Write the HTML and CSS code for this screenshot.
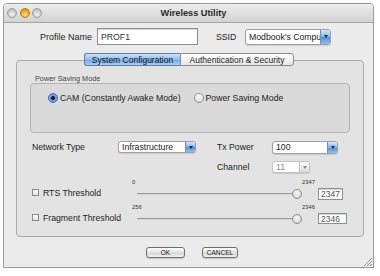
FILE: index.html
```html
<!DOCTYPE html>
<html>
<head>
<meta charset="utf-8">
<link rel="stylesheet" href="styles.css">
</head>
<body>
<div class="win">
  <div class="titlebar">
    <div class="lights">
      <span class="light gray"></span>
      <span class="light orange"></span>
      <span class="light gray"></span>
    </div>
    <div class="title">Wireless Utility</div>
    <div></div>
  </div>

  <div class="profile-row">
    <span class="lbl profile-lbl">Profile Name</span>
    <div class="textbox tb-profile">PROF1</div>
    <span class="lbl ssid-lbl">SSID</span>
    <div class="select sel-ssid"><span class="sel-text">Modbook's Compu</span><span class="sel-btn blue"><i class="arrow"></i></span></div>
  </div>

  <div class="tabs">
    <div class="tab active">System Configuration</div>
    <div class="tab">Authentication &amp; Security</div>
  </div>

  <div class="panel">
    <div class="group-lbl">Power Saving Mode</div>
    <div class="group">
      <span class="radio on"></span><span class="radio-text">CAM (Constantly Awake Mode)</span>
      <span class="radio r2"></span><span class="radio-text">Power Saving Mode</span>
    </div>

    <div class="row-a">
      <span class="lbl net-lbl">Network Type</span>
      <div class="select sel-infra"><span class="sel-text">Infrastructure</span><span class="sel-btn blue"><i class="arrow"></i></span></div>
      <span class="lbl tx-lbl">Tx Power</span>
      <div class="select sel-tx"><span class="sel-text">100</span><span class="sel-btn blue"><i class="arrow"></i></span></div>
    </div>

    <div class="row-b">
      <span class="lbl tx-lbl">Channel</span>
      <div class="select sel-ch dim"><span class="sel-text">11</span><span class="sel-btn grey"><i class="arrow"></i></span></div>
    </div>

    <div class="srow">
      <div class="check-cell"><span class="check"></span><span>RTS Threshold</span></div>
      <div class="min">0</div>
      <div class="slider"><span class="track"></span><span class="thumb"></span></div>
      <div class="max">2347</div>
      <div class="val-cell"><div class="textbox tb-val">2347</div></div>
    </div>

    <div class="srow frag">
      <div class="check-cell"><span class="check"></span><span>Fragment Threshold</span></div>
      <div class="min">256</div>
      <div class="slider"><span class="track"></span><span class="thumb"></span></div>
      <div class="max">2346</div>
      <div class="val-cell"><div class="textbox tb-val wide">2346</div></div>
    </div>
  </div>

  <div class="buttons">
    <div class="btn ok">OK</div>
    <div class="btn cancel">CANCEL</div>
  </div>

  <div class="grip"></div>
</div>
</body>
</html>
```

FILE: styles.css
```css
* { box-sizing: border-box; }

body {
  margin: 0;
  background: #ffffff;
  font-family: "Liberation Sans", Arial, sans-serif;
  font-size: 8.7px;
  color: #1c1c1c;
}

.win {
  margin: 3px 0 0 3px;
  width: 371px;
  height: 265px;
  border: 1px solid #9a9a9a;
  border-radius: 4px 4px 0 0;
  background: #ebebeb;
  display: flex;
  flex-direction: column;
  position: relative;
}

.titlebar {
  height: 19px;
  flex: none;
  background: linear-gradient(#ededed, #d2d2d2);
  border-bottom: 1px solid #a3a3a3;
  border-radius: 3px 3px 0 0;
  display: grid;
  grid-template-columns: 1fr auto 1fr;
  align-items: center;
}

.lights {
  display: flex;
  gap: 2.5px;
  padding-left: 3px;
}

.light {
  width: 10px;
  height: 10px;
  border-radius: 50%;
  border: 1px solid #9c9c9c;
}

.light.gray {
  background: radial-gradient(circle at 50% 70%, #f4f4f4, #c4c4c4 70%);
}

.light.orange {
  border-color: #b87a20;
  background: radial-gradient(circle at 50% 70%, #ffe48a, #f0a020 60%, #c77a10);
}

.title {
  font-weight: bold;
  font-size: 9.2px;
  color: #2b2b2b;
  padding-left: 10px;
}

.lbl { white-space: nowrap; }

.profile-row {
  display: flex;
  align-items: center;
  margin-top: 5px;
  padding-left: 36px;
  height: 17px;
}

.profile-lbl { width: 57px; font-size: 9px; }

.textbox {
  background: #ffffff;
  border: 1px solid #8f8f8f;
  box-shadow: inset 0 1px 1px rgba(0,0,0,0.18);
  padding-left: 3px;
  display: flex;
  align-items: center;
  color: #333;
}

.tb-profile { width: 101px; height: 17px; }

.ssid-lbl { margin-left: 18px; width: 29px; }

.select {
  display: flex;
  align-items: center;
  background: #ffffff;
  border: 1px solid #a0a0a0;
  border-radius: 3px;
  overflow: hidden;
  box-shadow: 0 1px 1px rgba(0,0,0,0.12);
}

.sel-text {
  flex: 1;
  padding-left: 3px;
  white-space: nowrap;
  overflow: hidden;
  color: #222;
}

.sel-btn {
  width: 10px;
  align-self: stretch;
  display: flex;
  align-items: center;
  justify-content: center;
  border-left: 1px solid #6e8fb8;
}

.sel-btn.blue { background: linear-gradient(#d6e8fa, #7fb3ea 50%, #4f8fdc 51%, #8cc0f2); }
.sel-btn.grey { background: linear-gradient(#fafafa, #dcdcdc); border-left-color: #bcbcbc; }

.arrow {
  width: 0;
  height: 0;
  border-left: 2.5px solid transparent;
  border-right: 2.5px solid transparent;
  border-top: 3px solid #1a2a44;
}

.sel-btn.grey .arrow { border-top-color: #8a8a8a; }

.sel-ssid { width: 86px; height: 16px; }

.tabs {
  display: flex;
  justify-content: center;
  margin-top: 8px;
  margin-left: 1px;
  height: 13px;
  position: relative;
  z-index: 1;
}

.tab {
  height: 13px;
  display: flex;
  align-items: center;
  justify-content: center;
  border: 1px solid #8a8a8a;
  background: linear-gradient(#ffffff, #e6e6e6);
  font-size: 8.5px;
  color: #222;
  white-space: nowrap;
}

.tab:first-child { width: 96px; border-radius: 3px 0 0 3px; border-right: none; }
.tab:last-child { width: 114px; border-radius: 0 3px 3px 0; }

.tab.active {
  background: linear-gradient(#cfe4f8, #8dbcec 50%, #6fa8e4 51%, #a8d0f6);
  border-color: #5f7fa8;
  color: #111;
}

.panel {
  margin: -6px 0 0 12px;
  width: 348px;
  height: 177px;
  flex: none;
  border: 1px solid #ababab;
  border-radius: 4px;
  background: #e3e3e3;
  padding-top: 14px;
}

.group-lbl {
  font-size: 7.3px;
  color: #444;
  height: 8px;
  line-height: 8px;
  padding-left: 18px;
}

.group {
  margin-left: 13px;
  width: 320px;
  height: 50px;
  border: 1px solid #b3b3b3;
  border-radius: 4px;
  background: #dadada;
  display: flex;
  align-items: flex-start;
  padding: 9px 0 0 17px;
}

.radio {
  width: 10px;
  height: 10px;
  border-radius: 50%;
  border: 1px solid #8d8d8d;
  background: linear-gradient(#ffffff, #dedede);
  flex: none;
  position: relative;
}

.radio.on {
  border-color: #3d6aa6;
  background: radial-gradient(circle, #0d1a33 0 1.6px, #5b95dc 2.2px, #9cc6f2);
}

.radio.r2 { margin-left: 13px; }

.radio-text {
  margin-left: 2px;
  line-height: 10px;
  white-space: nowrap;
}

.row-a {
  display: flex;
  align-items: center;
  margin-top: 7px;
  padding-left: 15px;
  height: 14px;
}

.net-lbl { width: 86px; }
.tx-lbl { width: 55px; }

.sel-infra { width: 78px; height: 12px; margin-right: 21px; }
.sel-tx { width: 66px; height: 13px; }

.row-b {
  display: flex;
  align-items: center;
  margin-top: 7px;
  padding-left: 200px;
  height: 12px;
}

.sel-ch { width: 38px; height: 12px; border-color: #c2c2c2; }
.sel-ch .sel-text { color: #8a8a8a; }

.srow {
  display: grid;
  grid-template-columns: 100px 170px 1fr;
  grid-template-rows: 9px 13px;
  margin-top: 5px;
  padding-left: 15px;
}

.srow.frag { margin-top: 3px; }

.check-cell {
  grid-column: 1;
  grid-row: 2;
  display: flex;
  align-items: center;
  gap: 4px;
  white-space: nowrap;
  margin-top: -2px;
}

.check {
  width: 7px;
  height: 7px;
  border: 1px solid #8a8a8a;
  background: linear-gradient(#ffffff, #e0e0e0);
  flex: none;
}

.min, .max {
  grid-row: 1;
  font-size: 5.8px;
  color: #333;
  line-height: 9px;
}

.min { grid-column: 2; }
.max { grid-column: 3; }

.slider {
  grid-column: 2;
  grid-row: 2;
  display: flex;
  align-items: center;
  padding-left: 5px;
}

.track {
  width: 155px;
  height: 2px;
  background: #9a9a9a;
  border-bottom: 1px solid #d8d8d8;
}

.thumb {
  width: 10px;
  height: 10px;
  border-radius: 50%;
  border: 1px solid #8a8a8a;
  background: radial-gradient(circle at 50% 35%, #f7f7f7, #cfcfcf);
  flex: none;
}

.val-cell {
  grid-column: 3;
  grid-row: 2;
  display: flex;
  align-items: center;
  padding-left: 16px;
}

.tb-val { width: 25px; height: 12px; font-size: 8.5px; color: #555; padding-left: 2px; }
.tb-val.wide { width: 29px; height: 11px; }

.buttons {
  display: flex;
  gap: 17px;
  margin-top: 10px;
  padding-left: 142px;
}

.btn {
  height: 11px;
  border: 1px solid #6f6f6f;
  border-radius: 3px;
  background: linear-gradient(#ffffff, #e2e2e2 50%, #d2d2d2 51%, #f2f2f2);
  display: flex;
  align-items: center;
  justify-content: center;
  font-size: 6.5px;
  color: #222;
  box-shadow: 0 1px 1px rgba(0,0,0,0.15);
}

.btn.ok { width: 39px; }
.btn.cancel { width: 36px; }

.grip {
  position: absolute;
  right: 1px;
  bottom: 1px;
  width: 8px;
  height: 8px;
  background: linear-gradient(135deg, transparent 45%, #9a9a9a 46%, #9a9a9a 52%, transparent 53%, transparent 64%, #9a9a9a 65%, #9a9a9a 71%, transparent 72%, transparent 83%, #9a9a9a 84%, #9a9a9a 90%, transparent 91%);
}
```
